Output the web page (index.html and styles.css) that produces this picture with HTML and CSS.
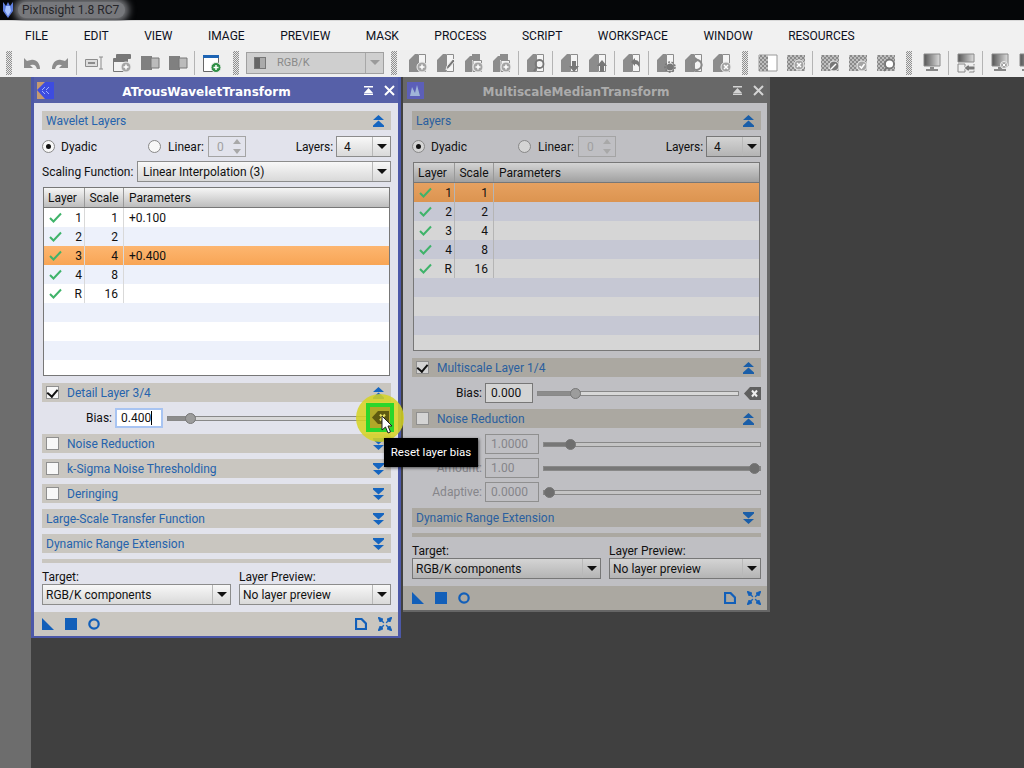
FILE: index.html
```html
<!DOCTYPE html>
<html lang="en">
<head>
<meta charset="utf-8">
<title>PixInsight 1.8 RC7</title>
<link rel="stylesheet" href="styles.css">
</head>
<body>
<svg class="defs" width="0" height="0" aria-hidden="true">
  <defs>
    <pattern id="chk" width="4" height="4" patternUnits="userSpaceOnUse">
      <rect width="4" height="4" fill="#bdbdbd"/>
      <rect width="2" height="2" fill="#8a8a8a"/>
      <rect x="2" y="2" width="2" height="2" fill="#8a8a8a"/>
    </pattern>
    <symbol id="undo" viewBox="0 0 20 20"><path d="M2 5v10h9l-3-3h1c3-1 5 0 6 4h3c0-6-4-10-9-9-2 0-3 1-4 1L2 5z" fill="#8c8c8c"/></symbol>
    <symbol id="redo" viewBox="0 0 20 20"><path d="M18 5v10H9l3-3h-1c-3-1-5 0-6 4H2c0-6 4-10 9-9 2 0 3 1 4 1l3-3z" fill="#8c8c8c"/></symbol>
    <symbol id="rename" viewBox="0 0 20 20"><path d="M1.500 6.500h12v7h-12z" fill="#ddd" stroke="#8c8c8c"/><path d="M4 10h7" stroke="#8c8c8c" stroke-width="2"/><path d="M15 4h4M15 16h4M17 4v12" stroke="#8c8c8c" fill="none"/></symbol>
    <symbol id="newwin" viewBox="0 0 20 20"><path d="M4.500 1.500h14v4h-14zM1.500 5.500h14v13h-14z" fill="#f2f2f2" stroke="#777"/><path d="M2 6h13v3H2zM5 2h13v3H5z" fill="#777"/><circle cx="14" cy="14" r="5" fill="#a4a4a4" stroke="#eee"/><path d="M11.500 14h5M14 11.500v5" stroke="#fff" stroke-width="1.500"/></symbol>
    <symbol id="dup" viewBox="0 0 20 20"><path d="M1 3h11v14H1z" fill="#808080"/><path d="M11 5h8v10h-8z" fill="#bbb" stroke="#777"/></symbol>
    <symbol id="newblue" viewBox="0 0 20 20"><path d="M1.500 2.500h15v16h-15z" fill="#fff" stroke="#666"/><path d="M1 2h16v3H1z" fill="#1d64b4"/><circle cx="14" cy="14.500" r="5" fill="#2f8f45" stroke="#eee"/><path d="M11.500 14.500h5M14 12v5" stroke="#fff" stroke-width="1.500"/></symbol>
    <symbol id="pb" viewBox="0 0 20 20"><path d="M1 7l6-6h3v18H1z" fill="#8c8c8c"/><path d="M10.500 1.500h7v17h-7z" fill="#f4f4f4" stroke="#8c8c8c"/></symbol>
    <symbol id="pb2" viewBox="0 0 20 20"><path d="M1 8l5-5h2V1h8v6H8v12H1z" fill="#8c8c8c"/><path d="M9 7.500h8.500v11H9z" fill="#f4f4f4" stroke="#8c8c8c"/></symbol>
    <symbol id="m" viewBox="0 0 20 20"><path d="M1 2h18v16H1z" fill="#fff" stroke="#999"/><path d="M1 2h9v16H1z" fill="url(#chk)"/></symbol>
    <symbol id="mm" viewBox="0 0 20 20"><path d="M1 2h18v16H1z" fill="url(#chk)"/></symbol>
    <symbol id="mon" viewBox="0 0 20 20"><defs><linearGradient id="mg" x1="0" x2="1" y1="0" y2="0"><stop offset="0" stop-color="#555"/><stop offset="1" stop-color="#ddd"/></linearGradient></defs><path d="M2 1h16v12H2z" fill="url(#mg)" stroke="#888"/><path d="M8 14h4v2h4v2H4v-2h4z" fill="#888"/></symbol>
    <symbol id="up2" viewBox="0 0 11 12"><path d="M5.500 0L11 5H0zM5.500 5.500L11 10.500V12H0v-1.500z" fill="currentColor"/></symbol>
    <symbol id="down2" viewBox="0 0 11 12"><path d="M0 0h11v1.500L5.500 6.500 0 1.500zM0 7h11L5.500 12z" fill="currentColor"/></symbol>
    <symbol id="chkmark" viewBox="0 0 13 11"><path d="M1 6l3.500 3.500L12 1.500" fill="none" stroke="#3fb36a" stroke-width="2"/></symbol>
    <symbol id="reset" viewBox="0 0 17 13"><path d="M0 6.500L6 0h11v13H6z" fill="currentColor"/><path d="M8 3.500l5 6M13 3.500l-5 6" stroke="var(--reset-x,#fff)" stroke-width="2"/></symbol>
    <symbol id="f-tri" viewBox="0 0 12 12"><path d="M0 0l12 12H0z" fill="currentColor"/></symbol>
    <symbol id="f-sq" viewBox="0 0 12 12"><path d="M0 0h12v12H0z" fill="currentColor"/></symbol>
    <symbol id="f-ring" viewBox="0 0 12 12"><circle cx="6" cy="6" r="4.700" fill="none" stroke="currentColor" stroke-width="2.200"/></symbol>
    <symbol id="f-doc" viewBox="0 0 12 12"><path d="M1 1h5.500L11 5.500V11H1z" fill="none" stroke="currentColor" stroke-width="2.200"/></symbol>
    <symbol id="f-col" viewBox="0 0 14 14"><path d="M0 0l5 2-1 1 2 3-3-2-1 1zM14 0l-2 5-1-1-3 2 2-3-1-1zM0 14l2-5 1 1 3-2-2 3 1 1zM14 14l-5-2 1-1-2-3 3 2 1-1z" fill="currentColor" stroke="currentColor" stroke-width=".8"/></symbol>
  </defs>
</svg>

<div class="app">
  <header class="sysbar">
    <svg class="sys-icon" viewBox="0 0 14 16" width="14" height="16"><path d="M2 0l3 4 2-4 2 4 3-4v9l-5 7-5-7z" fill="#5f7fe0"/><path d="M5 4h4l1 5-3 5-3-5z" fill="#a9c4ff"/></svg>
    <span class="sys-title">PixInsight 1.8 RC7</span>
  </header>

  <nav class="menu">
    <span>FILE</span><span>EDIT</span><span>VIEW</span><span>IMAGE</span><span>PREVIEW</span><span>MASK</span><span>PROCESS</span><span>SCRIPT</span><span>WORKSPACE</span><span>WINDOW</span><span>RESOURCES</span>
  </nav>

  <div class="toolbar">
    <i class="grip"></i>
    <svg class="ti"><use href="#undo"/></svg>
    <svg class="ti"><use href="#redo"/></svg>
    <i class="sep"></i>
    <svg class="ti"><use href="#rename"/></svg>
    <svg class="ti"><use href="#newwin"/></svg>
    <svg class="ti"><use href="#dup"/></svg>
    <svg class="ti"><use href="#dup"/></svg>
    <i class="sep"></i>
    <svg class="ti"><use href="#newblue"/></svg>
    <i class="grip wide"></i>
    <div class="tcombo">
      <i class="tcombo-swatch"></i>
      <span class="tcombo-text">RGB/K</span>
      <span class="tcombo-arrow"></span>
    </div>
    <i class="grip wide"></i>
    <svg class="ti" viewBox="0 0 20 20"><use href="#pb"/><circle cx="14" cy="14" r="5" fill="#a4a4a4" stroke="#eee"/><path d="M11.500 14h5M14 11.500v5" stroke="#fff" stroke-width="1.500"/></svg>
    <svg class="ti" viewBox="0 0 20 20"><use href="#pb"/><path d="M10 17l1-4 6-7 2 2-6 7z" fill="#777" stroke="#eee"/></svg>
    <svg class="ti" viewBox="0 0 20 20"><use href="#pb2"/><circle cx="14" cy="14" r="5" fill="#a4a4a4" stroke="#eee"/><path d="M11.500 14h5M14 11.500v5" stroke="#fff" stroke-width="1.500"/></svg>
    <svg class="ti" viewBox="0 0 20 20"><use href="#pb2"/><circle cx="14" cy="14" r="5" fill="#a4a4a4" stroke="#eee"/><path d="M11.500 14h5M14 11.500v5" stroke="#fff" stroke-width="1.500"/></svg>
    <i class="sep"></i>
    <svg class="ti" viewBox="0 0 20 20"><use href="#pb"/><circle cx="13.500" cy="11" r="4" fill="none" stroke="#777" stroke-width="1.800"/><path d="M11 14l-3 4" stroke="#777" stroke-width="2"/></svg>
    <i class="sep"></i>
    <svg class="ti" viewBox="0 0 20 20"><use href="#pb"/><path d="M12 8h4v5h3l-5 6-5-6h3z" fill="#777"/></svg>
    <svg class="ti" viewBox="0 0 20 20"><use href="#pb"/><path d="M14 7l5 6h-3v6h-4v-6H9z" fill="#777"/></svg>
    <i class="sep"></i>
    <svg class="ti" viewBox="0 0 20 20"><use href="#pb"/><path d="M9 9l4-4v2c4 0 5 3 4 7-1-2-2-3-4-3v2z" fill="#777"/></svg>
    <i class="sep"></i>
    <svg class="ti" viewBox="0 0 20 20"><use href="#pb"/><circle cx="14" cy="14" r="3.500" fill="#777"/><circle cx="14" cy="14" r="5" fill="none" stroke="#777" stroke-width="1.500" stroke-dasharray="2 1.500"/></svg>
    <svg class="ti" viewBox="0 0 20 20"><use href="#pb"/><path d="M9.500 8a5 5 0 1 0 4-1" fill="none" stroke="#888" stroke-width="2"/><path d="M11 4l4 3-4 3z" fill="#888"/></svg>
    <svg class="ti" viewBox="0 0 20 20"><use href="#pb"/><circle cx="14" cy="14" r="5" fill="#a4a4a4" stroke="#eee"/><path d="M12 12l4 4M16 12l-4 4" stroke="#fff" stroke-width="1.500"/></svg>
    <i class="grip"></i>
    <svg class="ti"><use href="#m"/></svg>
    <svg class="ti" viewBox="0 0 20 20"><use href="#mm"/><circle cx="13" cy="12" r="5" fill="#a4a4a4" stroke="#eee"/><path d="M11 10l4 4M15 10l-4 4" stroke="#fff" stroke-width="1.500"/></svg>
    <i class="sep"></i>
    <svg class="ti" viewBox="0 0 20 20"><use href="#mm"/><circle cx="14" cy="13" r="5" fill="#777" stroke="#eee"/><path d="M11 16l5-5" stroke="#fff" stroke-width="1.500"/></svg>
    <svg class="ti" viewBox="0 0 20 20"><use href="#mm"/><circle cx="14" cy="13" r="5" fill="#a4a4a4" stroke="#eee"/><path d="M11.500 13l2 2 3-4" stroke="#fff" fill="none" stroke-width="1.500"/></svg>
    <svg class="ti" viewBox="0 0 20 20"><use href="#mm"/><circle cx="13.500" cy="11" r="4.500" fill="#fff" stroke="#777" stroke-width="1.800"/><path d="M11 14l-3 4" stroke="#777" stroke-width="2"/></svg>
    <i class="grip"></i>
    <svg class="ti"><use href="#mon"/></svg>
    <i class="sep"></i>
    <svg class="ti" viewBox="0 0 20 20"><path d="M2 1h16v8H2z" fill="url(#mg)" stroke="#888"/><path d="M2 11h7v8H2zM18 11v8h-5" fill="none" stroke="#888"/><path d="M8 15l5-4v2h6v4h-6v2z" fill="#777" stroke="#eee"/></svg>
    <i class="sep"></i>
    <svg class="ti" viewBox="0 0 20 20"><use href="#mon"/><circle cx="14" cy="12" r="3.500" fill="#a4a4a4" stroke="#eee"/><path d="M12.500 10.500l3 3M15.500 10.500l-3 3" stroke="#fff"/></svg>
    <svg class="ti"><use href="#mon"/></svg>
  </div>

  <main class="desktop">
    <div class="strip"></div>

    <section class="win win-a">
      <div class="titlebar">
        <svg class="tb-icon" viewBox="0 0 17 17"><path d="M0 0h17v17H0z" fill="#c59a70"/><path d="M0 8l8-8h9v17H8z" fill="#3d4ce0"/><path d="M5 8l3-3M5 9l3 3M9 8l3-3M9 9l3 3" stroke="#9fb0ff"/></svg>
        <h1 class="tb-title">ATrousWaveletTransform</h1>
        <svg class="tb-btn" viewBox="0 0 11 11"><path d="M1 1h9v1.500H1zM5.500 3L10 8H1zM1 8.500h9V10H1z" fill="#fff"/></svg>
        <svg class="tb-btn tb-close" viewBox="0 0 11 11"><path d="M1 1l9 9M10 1l-9 9" stroke="#fff" stroke-width="2"/></svg>
      </div>
      <div class="body">
        <div class="bar"><span class="bar-text">Wavelet Layers</span><svg class="arrows"><use href="#up2"/></svg></div>
        <div class="opts">
          <i class="radio on"></i><span class="radio-label dy">Dyadic</span>
          <i class="radio r2"></i><span class="radio-label li">Linear:</span>
          <div class="spin"><span>0</span><i class="spin-btns"></i></div>
          <span class="lay-label">Layers:</span>
          <div class="combo layers"><span>4</span><i class="arrow"></i></div>
        </div>
        <div class="scaling">
          <span class="sc-label">Scaling Function:</span>
          <div class="combo grow"><span>Linear Interpolation (3)</span><i class="arrow"></i></div>
        </div>
        <div class="table">
          <div class="tr th"><span class="c1">Layer</span><span class="c2">Scale</span><span class="c3">Parameters</span></div>
          <div class="tr"><span class="c1"><svg class="ok"><use href="#chkmark"/></svg><b>1</b></span><span class="c2">1</span><span class="c3">+0.100</span></div>
          <div class="tr alt"><span class="c1"><svg class="ok"><use href="#chkmark"/></svg><b>2</b></span><span class="c2">2</span><span class="c3"></span></div>
          <div class="tr sel"><span class="c1"><svg class="ok"><use href="#chkmark"/></svg><b>3</b></span><span class="c2">4</span><span class="c3">+0.400</span></div>
          <div class="tr alt"><span class="c1"><svg class="ok"><use href="#chkmark"/></svg><b>4</b></span><span class="c2">8</span><span class="c3"></span></div>
          <div class="tr"><span class="c1"><svg class="ok"><use href="#chkmark"/></svg><b>R</b></span><span class="c2">16</span><span class="c3"></span></div>
          <div class="tr alt empty"></div>
          <div class="tr empty"></div>
          <div class="tr alt empty"></div>
          <div class="tr empty"></div>
        </div>
        <div class="bar after-table"><i class="cb on"></i><span class="bar-text">Detail Layer 3/4</span><svg class="arrows"><use href="#up2"/></svg></div>
        <div class="param">
          <span class="p-label">Bias:</span>
          <div class="p-input short focus"><span>0.400</span><i class="caret"></i></div>
          <div class="slider"><i class="fill" style="width:11%"></i><i class="thumb" style="left:11%"></i></div>
          <svg class="reset"><use href="#reset"/></svg>
        </div>
        <div class="bar"><i class="cb"></i><span class="bar-text">Noise Reduction</span><svg class="arrows"><use href="#down2"/></svg></div>
        <div class="bar"><i class="cb"></i><span class="bar-text">k-Sigma Noise Thresholding</span><svg class="arrows"><use href="#down2"/></svg></div>
        <div class="bar"><i class="cb"></i><span class="bar-text">Deringing</span><svg class="arrows"><use href="#down2"/></svg></div>
        <div class="bar"><span class="bar-text">Large-Scale Transfer Function</span><svg class="arrows"><use href="#down2"/></svg></div>
        <div class="bar"><span class="bar-text">Dynamic Range Extension</span><svg class="arrows"><use href="#down2"/></svg></div>
        <div class="thin"></div>
        <div class="targets">
          <div class="tg t1"><span class="tg-label">Target:</span><div class="combo"><span>RGB/K components</span><i class="arrow"></i></div></div>
          <div class="tg t2"><span class="tg-label">Layer Preview:</span><div class="combo"><span>No layer preview</span><i class="arrow"></i></div></div>
        </div>
        <div class="foot">
          <svg class="fi"><use href="#f-tri"/></svg>
          <svg class="fi"><use href="#f-sq"/></svg>
          <svg class="fi"><use href="#f-ring"/></svg>
          <span class="foot-space"></span>
          <svg class="fi"><use href="#f-doc"/></svg>
          <svg class="fi col"><use href="#f-col"/></svg>
        </div>
      </div>
    </section>

    <section class="win win-b">
      <div class="titlebar">
        <svg class="tb-icon" viewBox="0 0 17 17"><path d="M0 0h17v17H0z" fill="#5c5fb8"/><path d="M3 14l2-9 3 6 2-8 3 11z" fill="#9fb4d8"/></svg>
        <h1 class="tb-title">MultiscaleMedianTransform</h1>
        <svg class="tb-btn" viewBox="0 0 11 11"><path d="M1 1h9v1.500H1zM5.500 3L10 8H1zM1 8.500h9V10H1z" fill="#d4d4d4"/></svg>
        <svg class="tb-btn tb-close" viewBox="0 0 11 11"><path d="M1 1l9 9M10 1l-9 9" stroke="#d4d4d4" stroke-width="2"/></svg>
      </div>
      <div class="body">
        <div class="bar"><span class="bar-text">Layers</span><svg class="arrows"><use href="#up2"/></svg></div>
        <div class="opts">
          <i class="radio on"></i><span class="radio-label dy">Dyadic</span>
          <i class="radio r2"></i><span class="radio-label li">Linear:</span>
          <div class="spin"><span>0</span><i class="spin-btns"></i></div>
          <span class="lay-label">Layers:</span>
          <div class="combo layers"><span>4</span><i class="arrow"></i></div>
        </div>
        <div class="table">
          <div class="tr th"><span class="c1">Layer</span><span class="c2">Scale</span><span class="c3">Parameters</span></div>
          <div class="tr sel"><span class="c1"><svg class="ok"><use href="#chkmark"/></svg><b>1</b></span><span class="c2">1</span><span class="c3"></span></div>
          <div class="tr alt"><span class="c1"><svg class="ok"><use href="#chkmark"/></svg><b>2</b></span><span class="c2">2</span><span class="c3"></span></div>
          <div class="tr"><span class="c1"><svg class="ok"><use href="#chkmark"/></svg><b>3</b></span><span class="c2">4</span><span class="c3"></span></div>
          <div class="tr alt"><span class="c1"><svg class="ok"><use href="#chkmark"/></svg><b>4</b></span><span class="c2">8</span><span class="c3"></span></div>
          <div class="tr"><span class="c1"><svg class="ok"><use href="#chkmark"/></svg><b>R</b></span><span class="c2">16</span><span class="c3"></span></div>
          <div class="tr alt empty"></div>
          <div class="tr empty"></div>
          <div class="tr alt empty"></div>
          <div class="tr empty"></div>
        </div>
        <div class="bar after-table"><i class="cb on"></i><span class="bar-text">Multiscale Layer 1/4</span><svg class="arrows"><use href="#up2"/></svg></div>
        <div class="param">
          <span class="p-label">Bias:</span>
          <div class="p-input short"><span>0.000</span></div>
          <div class="slider"><i class="fill" style="width:18.5%"></i><i class="thumb" style="left:18.5%"></i></div>
          <svg class="reset"><use href="#reset"/></svg>
        </div>
        <div class="bar"><i class="cb"></i><span class="bar-text">Noise Reduction</span><svg class="arrows"><use href="#up2"/></svg></div>
        <div class="param off">
          <span class="p-label"></span>
          <div class="p-input"><span>1.0000</span></div>
          <div class="slider"><i class="fill" style="width:12%"></i><i class="thumb" style="left:12%"></i></div>
        </div>
        <div class="param off tight">
          <span class="p-label">Amount:</span>
          <div class="p-input"><span>1.00</span></div>
          <div class="slider"><i class="fill" style="width:97%"></i><i class="thumb" style="left:97%"></i></div>
        </div>
        <div class="param off tight">
          <span class="p-label">Adaptive:</span>
          <div class="p-input"><span>0.0000</span></div>
          <div class="slider"><i class="fill" style="width:2.500%"></i><i class="thumb" style="left:2.500%"></i></div>
        </div>
        <div class="bar"><span class="bar-text">Dynamic Range Extension</span><svg class="arrows"><use href="#down2"/></svg></div>
        <div class="thin"></div>
        <div class="targets">
          <div class="tg t1"><span class="tg-label">Target:</span><div class="combo"><span>RGB/K components</span><i class="arrow"></i></div></div>
          <div class="tg t2"><span class="tg-label">Layer Preview:</span><div class="combo"><span>No layer preview</span><i class="arrow"></i></div></div>
        </div>
        <div class="foot">
          <svg class="fi"><use href="#f-tri"/></svg>
          <svg class="fi"><use href="#f-sq"/></svg>
          <svg class="fi"><use href="#f-ring"/></svg>
          <span class="foot-space"></span>
          <svg class="fi"><use href="#f-doc"/></svg>
          <svg class="fi col"><use href="#f-col"/></svg>
        </div>
      </div>
    </section>

    <div class="spot"></div>
    <div class="spot-box"></div>
    <svg class="spot-icon"><use href="#reset"/></svg>
    <div class="tooltip">Reset layer bias</div>
    <svg class="cursor" viewBox="0 0 12 19"><path d="M1 1v14l3.500-3 2.500 6 2.500-1-2.500-6H11z" fill="#fff" stroke="#222" stroke-width="1"/></svg>
  </main>
</div>
</body>
</html>
```
FILE: styles.css
```css
* { box-sizing: border-box; }
html, body { margin: 0; height: 100%; }
body { font-family: Roboto, "Open Sans", sans-serif; font-size: 12px; color: #111; overflow: hidden; background: #3f3f3f; }
i { display: block; font-style: normal; }
.defs { position: absolute; }

.app { width: 1024px; height: 768px; display: flex; flex-direction: column; overflow: hidden; }

/* system title bar */
.sysbar { height: 21px; background: #050608; border-bottom: 1px solid #d8d8d8; display: flex; align-items: center; padding-left: 1px; flex: none; }
.sys-icon { flex: none; margin-right: 3px; position: relative; z-index: 1; }
.sys-title { font-size: 12px; line-height: 16px; color: #26262a; padding: 0 6px 0 4px; background: #77787c; border-radius: 8px; box-shadow: 0 0 7px 4px #77787c; }

/* menu */
.menu { height: 29px; background: #f1f1f1; display: flex; align-items: center; gap: 35.500px; padding-left: 25px; flex: none; font-size: 12px; color: #0d1020; }

/* toolbar */
.toolbar { height: 27px; background: #efefef; display: flex; align-items: center; flex: none; padding-bottom: 2px; overflow: hidden; }
.ti { width: 20px; height: 20px; margin: 0 4px; flex: none; }
.sep { width: 1px; height: 24px; background: #b4b4b4; margin: 0 3px 0 2px; flex: none; }
.grip { width: 6px; height: 24px; margin: 0 6px; flex: none; background: repeating-conic-gradient(#8f8f8f 0 25%, #e8e8e8 0 50%) 0 0 / 2px 2px; }
.grip.wide { margin: 0 7px; }
.tcombo { width: 138px; height: 22px; border: 1px solid #a0a0a0; background: #cfcfcf; display: flex; align-items: center; flex: none; color: #8a8a8a; font-size: 11px; }
.tcombo-swatch { width: 12px; height: 12px; margin-left: 7px; background: linear-gradient(90deg, #666 50%, #aaa 50%); border: 1px solid #777; }
.tcombo-text { margin-left: 11px; flex: 1; }
.tcombo-arrow { width: 18px; height: 100%; border-left: 1px solid #a8a8a8; position: relative; }
.tcombo-arrow::after { content: ""; position: absolute; left: 4px; top: 7px; border: 5px solid transparent; border-top: 5px solid #9a9a9a; border-bottom: 0; }

/* desktop */
.desktop { flex: 1; position: relative; background: #404040; }
.strip { position: absolute; left: 0; top: 0; bottom: 0; width: 31px; background: #6d6d6d; }

/* windows */
.win { position: absolute; top: 0; display: flex; flex-direction: column;
  --border: #4c58a8; --title: #5660a8; --title-text: #fff; --bg: #e2e3ec; --bar: #c9c6c0;
  --link: #2563ad; --arrow: #1565c0; --text: #111; --field-border: #8c8c8c; --hi: #f8f8f8; --lo: #d9d9d9;
  --white: #fff; --alt: #edf1fb; --sel-hi: #fdb670; --sel-lo: #f8a555; --th-hi: #f6f6f6; --th-lo: #bdbdbd; --line: #d9d9d9; --reset: #6a6a6a; }
.win-a { left: 31px; width: 370px; height: 561px; border: 3px solid var(--border); border-width: 0 3px 2px; }
.win-b { left: 403px; width: 367px; height: 535px; border: 3px solid var(--border); border-width: 0 3px 2px 0;
  --border: #666; --title: #686868; --title-text: #acacac; --bg: #bfbfc3; --bar: #aba8a1;
  --link: #2a5f9f; --arrow: #1a5ea8; --white: #d6d6d6; --alt: #c6c8d4; --sel-hi: #e6a160; --sel-lo: #dc9450; --hi: #d4d4d4; --lo: #b4b4b4;
  --th-hi: #d4d4d4; --th-lo: #a0a0a0; --line: #b5b5b5; --field-border: #777; --reset: #5f5f5f; }

.titlebar { height: 26px; background: var(--title); display: flex; align-items: center; flex: none; color: var(--title-text); padding: 1px 0 0 3px; }
.win-b .titlebar { padding-left: 4px; }
.tb-icon { width: 17px; height: 17px; flex: none; }
.tb-title { flex: 1; margin: 0; text-align: center; font: bold 12px "DejaVu Sans", sans-serif; padding: 2px 4px 0 0; }
.tb-btn { width: 11px; height: 11px; flex: none; }
.tb-close { margin: 0 3px 0 10px; }

.body { flex: 1; background: var(--bg); display: flex; flex-direction: column; gap: 6px; padding: 8px 7px 0 8px; color: var(--text); min-height: 0; }
.win-b .body { padding: 8px 6px 0 9px; }

.bar { height: 19px; background: var(--bar); display: flex; align-items: center; padding: 0 7px 0 4px; flex: none; color: var(--link); }
.bar-text { flex: 1; font-size: 12px; line-height: 19px; padding-top: 1px; }
.arrows { width: 11px; height: 12px; color: var(--arrow); flex: none; }
.after-table { margin-top: 1px; }
.cb { width: 13px; height: 13px; border: 1px solid #8f8f8f; background: var(--hi); margin: 0 8px 0 0; flex: none; position: relative; }
.cb.on::after { content: ""; position: absolute; left: 2px; top: 0; width: 5px; height: 8px; border: solid #111; border-width: 0 2px 2px 0; transform: rotate(40deg); }

/* option row */
.opts { height: 21px; display: flex; align-items: center; flex: none; }
.radio { width: 13px; height: 13px; border-radius: 50%; border: 1px solid #888; background: var(--hi); position: relative; flex: none; }
.radio.on::after { content: ""; position: absolute; left: 3px; top: 3px; width: 5px; height: 5px; border-radius: 50%; background: #111; }
.radio-label { flex: none; }
.dy { width: 87px; margin-left: 6px; }
.li { width: 40px; margin-left: 7px; }
.spin { width: 38px; height: 21px; border: 1px solid #a4a4a4; display: flex; align-items: center; justify-content: space-between; padding: 0 3px 0 8px; color: #a0a0a0; flex: none; }
.spin-btns { width: 9px; height: 15px; position: relative; }
.spin-btns::before, .spin-btns::after { content: ""; position: absolute; left: 0; border: 4.500px solid transparent; }
.spin-btns::before { top: 0; border-top: 0; border-bottom: 5px solid #a8a8a8; }
.spin-btns::after { bottom: 0; border-bottom: 0; border-top: 5px solid #a8a8a8; }
.lay-label { flex: 1; text-align: right; padding-right: 3px; letter-spacing: -.1px; }

/* combos */
.combo { height: 21px; border: 1px solid var(--field-border); background: linear-gradient(var(--hi), var(--lo)); display: flex; align-items: center; padding-left: 3px; position: relative; }
.combo span { flex: 1; white-space: nowrap; overflow: hidden; }
.combo .arrow { width: 18px; height: 19px; border-left: 1px solid #b8b8b8; position: relative; flex: none; }
.combo .arrow::after { content: ""; position: absolute; left: 4px; top: 7px; border: 5px solid transparent; border-top: 5px solid #111; border-bottom: 0; }
.layers { width: 55px; padding-left: 7px; }
.grow { flex: 1; padding-left: 5px; }
.scaling { display: flex; align-items: center; height: 21px; margin-top: -2px; flex: none; }
.sc-label { width: 95px; white-space: nowrap; flex: none; }

/* table */
.table { margin: -1px 1px 0 1px; border: 1px solid #777; background: var(--white); flex: none; height: 189px; overflow: hidden; }
.tr { height: 19px; display: flex; align-items: center; background: var(--white); }
.tr.alt { background: var(--alt); }
.tr.sel { background: linear-gradient(var(--sel-hi), var(--sel-lo)); }
.tr.th { height: 20px; background: linear-gradient(var(--th-hi), var(--th-lo)); border-bottom: 1px solid #777; }
.c1 { width: 41px; height: 100%; display: flex; align-items: center; padding-left: 5px; border-right: 1px solid var(--line); flex: none; }
.c1 b { font-weight: normal; width: 14px; margin-left: 6px; text-align: right; }
.c2 { width: 39px; height: 100%; display: flex; align-items: center; justify-content: flex-end; padding-right: 5px; border-right: 1px solid var(--line); flex: none; }
.c3 { flex: 1; padding-left: 5px; }
.th .c1 { padding-left: 4px; border-right-color: #999; }
.th .c2 { justify-content: center; padding: 0; border-right-color: #999; }
.ok { width: 13px; height: 11px; flex: none; }

/* parameter rows */
.param { height: 20px; display: flex; align-items: center; flex: none; }
.param.tight { margin-top: -2px; }
.p-label { width: 70px; text-align: right; flex: none; }
.p-input { width: 54px; height: 20px; margin-left: 3px; border: 1px solid var(--field-border); background: var(--bg); display: flex; align-items: center; padding-left: 5px; flex: none; }
.p-input.short { width: 48px; background: var(--hi); }
.p-input.focus { border: 2px solid #a8c4f2; background: #fff; padding-left: 4px; }
.caret { width: 1px; height: 14px; background: #000; }
.off .p-label { color: #85858a; }
.off .p-input { color: #85858a; border-color: #8f8f8f; }
.slider { flex: 1; height: 5px; margin-left: 4px; border: 1px solid #888; background: #d8d8d8; position: relative; }
.short ~ .slider { margin-right: 5px; }
.fill { height: 100%; background: #8c8c8c; }
.thumb { position: absolute; top: -4px; width: 11px; height: 11px; margin-left: -5px; border-radius: 50%; background: #9c9c9c; border: 1px solid #777; }
.off .thumb { background: #6e6e6e; }
.off .slider { background: #c4c4c4; }
.off .fill { background: #777; }
.reset { width: 17px; height: 13px; color: var(--reset); flex: none; --reset-x: #eee; }

.thin { height: 4px; background: var(--bar); flex: none; }

/* target */
.targets { display: flex; margin-top: 1px; flex: none; }
.tg { display: flex; flex-direction: column; }
.tg-label { height: 20px; margin-top: -6px; line-height: 16px; padding-top: 5px; }
.t1 { width: 189px; }
.t2 { width: 152px; margin-left: 8px; }

/* footer */
.foot { height: 24px; margin: 1px -7px 0 -8px; background: var(--bar); display: flex; align-items: center; padding: 0 6px 0 8px; flex: none; color: #125fb9; }
.win-b .foot { margin: 1px -6px 0 -9px; padding-left: 9px; }
.fi { width: 12px; height: 12px; margin-right: 11px; flex: none; }
.foot-space { flex: 1; }
.fi.col { width: 14px; height: 14px; margin-right: 0; }

/* highlight over the reset button */
.spot { position: absolute; left: 356px; top: 317px; width: 48px; height: 48px; border-radius: 50%; background: #d6d420; opacity: .85; }
.spot-box { position: absolute; left: 366px; top: 326px; width: 28px; height: 29px; border: 4px solid #2bd62b; background: #b0a828; }
.spot-icon { position: absolute; left: 372px; top: 334px; width: 17px; height: 13px; color: #5e5a10; --reset-x: #e8e060; }
.tooltip { position: absolute; left: 384px; top: 361px; width: 94px; height: 29px; background: #000; color: #fff; font-size: 11.500px; line-height: 29px; text-align: center; box-shadow: 1px 1px 3px rgba(0,0,0,.6); }
.cursor { position: absolute; left: 381px; top: 338px; width: 12px; height: 19px; }
```
